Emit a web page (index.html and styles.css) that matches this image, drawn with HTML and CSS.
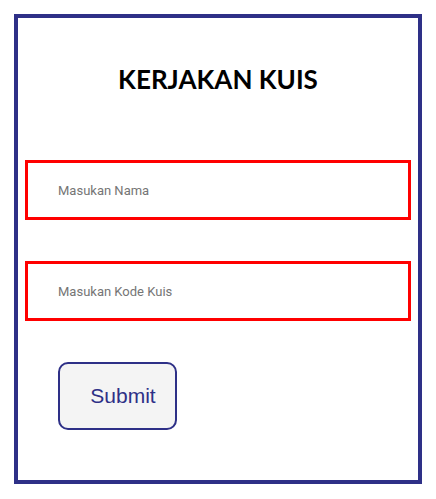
FILE: index.html
```html
<!DOCTYPE html>
<html>
<head>
<meta charset="utf-8">
<link rel="stylesheet" href="styles.css">
</head>
<body>
<div class="card">
  <h1 class="title">KERJAKAN KUIS</h1>
  <form class="form">
    <input class="field" type="text" placeholder="Masukan Nama">
    <input class="field" type="text" placeholder="Masukan Kode Kuis">
    <button class="submit" type="button">Submit</button>
  </form>
</div>
</body>
</html>
```
FILE: styles.css
```css
html, body {
  margin: 0;
  padding: 0;
  background: #ffffff;
}
body {
  padding: 14px;
}
.card {
  box-sizing: border-box;
  width: 408px;
  height: 470px;
  border: 4px solid #2e3087;
  padding: 0 7px;
}
.title {
  margin: 47px 0 0;
  height: 28px;
  line-height: 28px;
  text-align: center;
  font-family: Lato, sans-serif;
  font-weight: bold;
  font-size: 26px;
  color: #000;
}
.form {
  display: flex;
  flex-direction: column;
  align-items: flex-start;
  margin-top: 67px;
}
.field {
  box-sizing: border-box;
  width: 386px;
  height: 60px;
  border: 3px solid #ff0000;
  padding: 0 0 0 30px;
  margin: 0 0 41px;
  font-family: Roboto, sans-serif;
  font-size: 13px;
  outline: none;
}
.field::placeholder {
  color: #757575;
}
.submit {
  box-sizing: border-box;
  width: 119px;
  height: 68px;
  margin-left: 33px;
  border: 2px solid #2e3087;
  border-radius: 10px;
  background: #f4f4f4;
  color: #2e3087;
  font-family: "Liberation Sans", Arial, sans-serif;
  font-size: 21px;
  padding: 0 0 0 11px;
}
```
